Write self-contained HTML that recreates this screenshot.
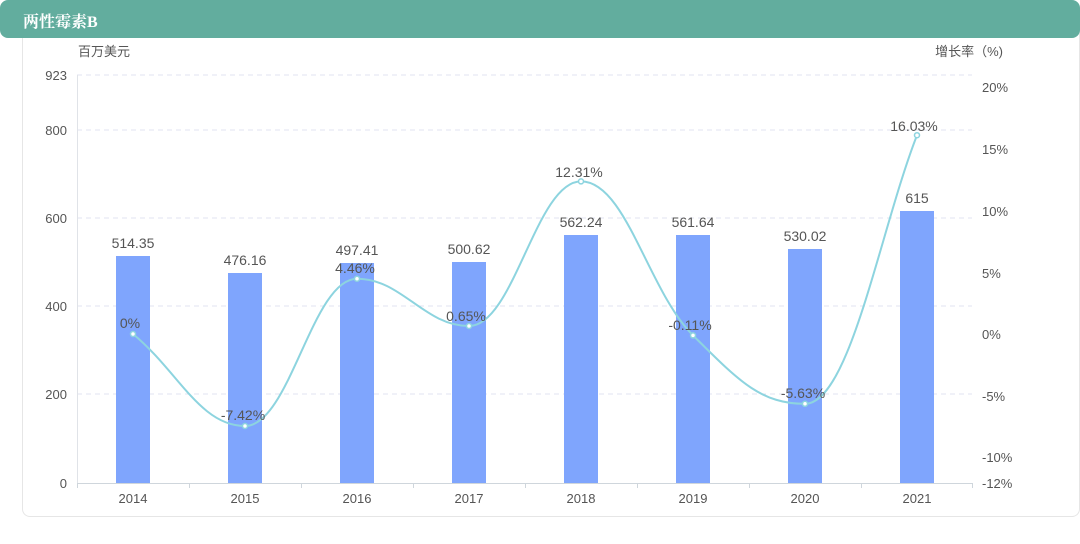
<!DOCTYPE html>
<html><head><meta charset="utf-8"><style>
body{margin:0;width:1080px;height:544px;background:#fff;overflow:hidden;font-family:"Liberation Sans","Noto Sans CJK SC",sans-serif;}
.hdr{position:absolute;left:0;top:0;width:1080px;height:38px;background:#62ad9e;border-radius:8px;}
.hdr span{position:absolute;left:23px;top:9px;color:#fff;font-weight:bold;font-size:16px;font-family:"Liberation Serif","Noto Serif CJK SC",serif;}
.card{position:absolute;left:22px;top:30px;width:1056px;height:486px;border:1px solid #e6e6e6;border-top:none;border-radius:0 0 8px 8px;}
svg{position:absolute;left:0;top:0}
</style></head><body>
<div class="card"></div>
<div class="hdr"><span>两性霉素B</span></div>
<svg width="1080" height="544" font-family="Liberation Sans, Noto Sans CJK SC, sans-serif">
<g stroke="#e0e3f0" stroke-dasharray="5,4">
<line x1="77" x2="972" y1="75" y2="75"/><line x1="77" x2="972" y1="130" y2="130"/><line x1="77" x2="972" y1="218" y2="218"/><line x1="77" x2="972" y1="306" y2="306"/><line x1="77" x2="972" y1="394" y2="394"/>
</g>
<line x1="77.5" x2="77.5" y1="75" y2="483" stroke="#e0e3e8"/>
<line x1="77" x2="972" y1="483.5" y2="483.5" stroke="#cfd6dc"/>
<g stroke="#cfd6dc"><line x1="77.5" x2="77.5" y1="483" y2="488"/><line x1="189.5" x2="189.5" y1="483" y2="488"/><line x1="301.5" x2="301.5" y1="483" y2="488"/><line x1="413.5" x2="413.5" y1="483" y2="488"/><line x1="525.5" x2="525.5" y1="483" y2="488"/><line x1="637.5" x2="637.5" y1="483" y2="488"/><line x1="749.5" x2="749.5" y1="483" y2="488"/><line x1="861.5" x2="861.5" y1="483" y2="488"/><line x1="972.5" x2="972.5" y1="483" y2="488"/></g>
<g fill="#7fa5fd">
<rect x="116" y="256" width="34" height="227"/><rect x="228" y="273" width="34" height="210"/><rect x="340" y="263" width="34" height="220"/><rect x="452" y="262" width="34" height="221"/><rect x="564" y="235" width="34" height="248"/><rect x="676" y="235" width="34" height="248"/><rect x="788" y="249" width="34" height="234"/><rect x="900" y="211" width="34" height="272"/>
</g>
<path d="M133,334 C178,371 200,426 245,426 C290,426 312,278.7 357,278.7 C402,278.7 424,326 469,326 C514,326 536,181.4 581,181.4 C626,181.4 648,290.7 693,335.4 C738,380 760,403.8 805,403.8 C850,403.8 880,230 917,135.2" fill="none" stroke="#8dd4df" stroke-width="2"/>
<g fill="#fff" stroke="#8dd4df" stroke-width="1.5">
<circle cx="133" cy="334" r="2.5"/><circle cx="245" cy="426" r="2.5"/><circle cx="357" cy="278.7" r="2.5"/><circle cx="469" cy="326" r="2.5"/><circle cx="581" cy="181.4" r="2.5"/><circle cx="693" cy="335.4" r="2.5"/><circle cx="805" cy="403.8" r="2.5"/><circle cx="917" cy="135.2" r="2.5"/></g>
<g fill="#555" font-size="14" text-anchor="middle">
<text x="133" y="248">514.35</text><text x="245" y="265">476.16</text><text x="357" y="255">497.41</text><text x="469" y="254">500.62</text><text x="581" y="227">562.24</text><text x="693" y="227">561.64</text><text x="805" y="241">530.02</text><text x="917" y="203">615</text>
<text x="130" y="328">0%</text><text x="243" y="420">-7.42%</text><text x="355" y="273">4.46%</text><text x="466" y="321">0.65%</text><text x="579" y="177">12.31%</text><text x="690" y="330">-0.11%</text><text x="803" y="398">-5.63%</text><text x="914" y="131">16.03%</text>
</g>
<g fill="#555" font-size="13" text-anchor="middle">
<text x="133" y="503">2014</text><text x="245" y="503">2015</text><text x="357" y="503">2016</text><text x="469" y="503">2017</text><text x="581" y="503">2018</text><text x="693" y="503">2019</text><text x="805" y="503">2020</text><text x="917" y="503">2021</text>
</g>
<g fill="#555" font-size="13" text-anchor="end">
<text x="67" y="80">923</text><text x="67" y="135">800</text><text x="67" y="223">600</text><text x="67" y="311">400</text><text x="67" y="399">200</text><text x="67" y="488">0</text>
</g>
<g fill="#555" font-size="13">
<text x="982" y="92">20%</text><text x="982" y="154">15%</text><text x="982" y="216">10%</text><text x="982" y="278">5%</text><text x="982" y="339">0%</text><text x="982" y="401">-5%</text><text x="982" y="462">-10%</text><text x="982" y="488">-12%</text>
</g>
<text x="78" y="56" fill="#555" font-size="13">百万美元</text>
<text x="1003" y="56" fill="#555" font-size="13" text-anchor="end">增长率（%)</text>
</svg>
</body></html>
